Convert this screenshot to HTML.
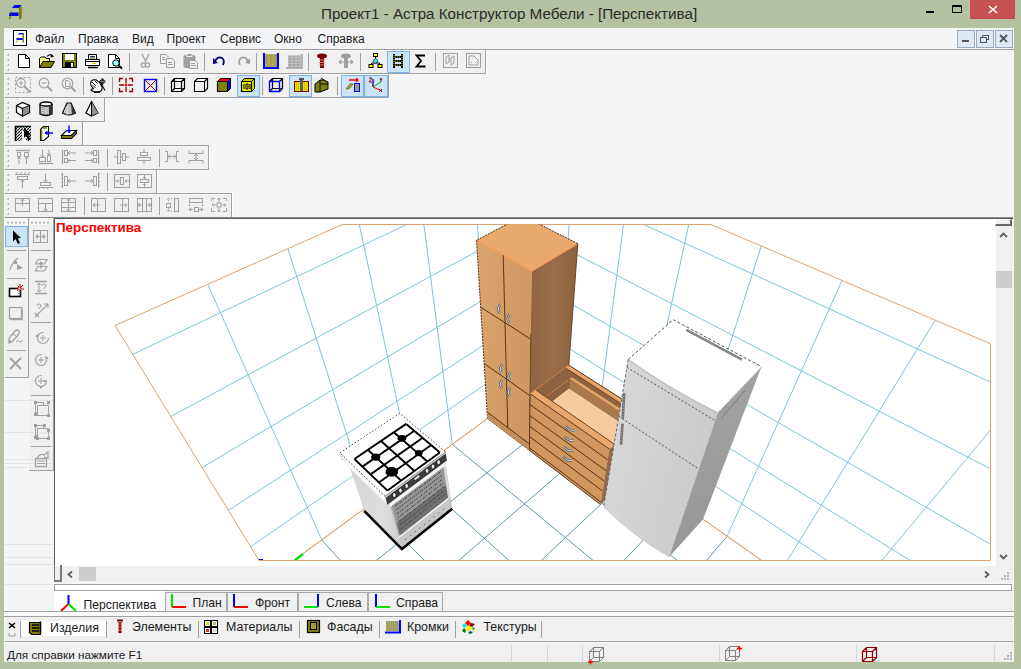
<!DOCTYPE html><html><head><meta charset="utf-8"><style>
html,body{margin:0;padding:0;width:1021px;height:669px;overflow:hidden;font-family:"Liberation Sans",sans-serif;}
svg{overflow:visible}
</style></head><body><div style="position:absolute;left:0px;top:0px;width:1021px;height:669px;background:#b4c2a1"></div>
<div style="position:absolute;left:321px;top:6px;font-size:15.2px;line-height:1;color:#2b2b2b;white-space:nowrap;">Проект1 - Астра Конструктор Мебели - [Перспектива]</div>
<svg style="position:absolute;left:0px;top:0px;" width="30" height="24" viewBox="0 0 30 24"><path d="M12 8 L14.5 5 H21.7 L19 8 Z" fill="#0000ff"/><path d="M19 8 L21.8 5.5 V18 L19 20 Z" fill="#808000"/><path d="M9 13 L10 12.6 H18.5 V16 H9 Z" fill="#0000ff"/><path d="M9 13.5 L11.8 10.5 V12.3 L9 15 Z" fill="#808000"/><path d="M9 16.5 H11.8 L9 20 Z" fill="#808000"/></svg>
<div style="position:absolute;left:926px;top:11px;width:8px;height:2px;background:#000"></div>
<div style="position:absolute;left:952px;top:5px;width:10px;height:8px;border:1px solid #000;border-top-width:2px;box-sizing:border-box"></div>
<div style="position:absolute;left:970px;top:0px;width:45px;height:19px;background:#c75050"></div>
<svg style="position:absolute;left:988px;top:5px;" width="10" height="9" viewBox="0 0 10 9"><path d="M1 1 L9 8 M9 1 L1 8" stroke="#fff" stroke-width="1.6"/></svg>
<div style="position:absolute;left:4px;top:28px;width:1010px;height:634px;background:#f4f5f7"></div>
<div style="position:absolute;left:5px;top:29px;width:1008px;height:20px;background:#f4f5f7"></div>
<div style="position:absolute;left:4px;top:49px;width:1010px;height:1px;background:#a9a9a9"></div>
<svg style="position:absolute;left:13px;top:30px;" width="14" height="16" viewBox="0 0 14 16"><rect x="0.5" y="0.5" width="13" height="15" fill="#fff" stroke="#000"/><path d="M5 4.5 L6.3 3 H11 L9.8 4.5 Z" fill="#0000ff"/><path d="M9.5 4.5 L11 3.2 V12 L9.5 13 Z" fill="#808000"/><path d="M3.5 8 H9.5 V10 H3.5 Z" fill="#0000ff"/><path d="M3.5 8.5 L5 7 V8 L3.5 9.5 Z M3.5 10.5 H5 L3.5 13 Z" fill="#808000"/></svg>
<div style="position:absolute;left:35px;top:33px;font-size:12px;line-height:1;color:#1a1a1a;white-space:nowrap;">Файл</div>
<div style="position:absolute;left:78px;top:33px;font-size:12px;line-height:1;color:#1a1a1a;white-space:nowrap;">Правка</div>
<div style="position:absolute;left:132px;top:33px;font-size:12px;line-height:1;color:#1a1a1a;white-space:nowrap;">Вид</div>
<div style="position:absolute;left:166.5px;top:33px;font-size:12px;line-height:1;color:#1a1a1a;white-space:nowrap;">Проект</div>
<div style="position:absolute;left:220px;top:33px;font-size:12px;line-height:1;color:#1a1a1a;white-space:nowrap;">Сервис</div>
<div style="position:absolute;left:274px;top:33px;font-size:12px;line-height:1;color:#1a1a1a;white-space:nowrap;">Окно</div>
<div style="position:absolute;left:317.5px;top:33px;font-size:12px;line-height:1;color:#1a1a1a;white-space:nowrap;">Справка</div>
<div style="position:absolute;left:957px;top:30px;width:18px;height:18px;background:#dfe9f5;border:1px solid #9aaabb;box-sizing:border-box"></div>
<div style="position:absolute;left:976px;top:30px;width:18px;height:18px;background:#dfe9f5;border:1px solid #9aaabb;box-sizing:border-box"></div>
<div style="position:absolute;left:995px;top:30px;width:18px;height:18px;background:#dfe9f5;border:1px solid #9aaabb;box-sizing:border-box"></div>
<svg style="position:absolute;left:957px;top:30px;" width="56" height="18" viewBox="0 0 56 18"><rect x="5" y="10" width="7" height="2" fill="#555"/><rect x="25.5" y="5.5" width="6" height="4" fill="none" stroke="#555"/><rect x="23.5" y="7.5" width="6" height="5" fill="#dfe9f5" stroke="#555"/><path d="M43 5 L50 12 M50 5 L43 12" stroke="#555" stroke-width="1.8"/></svg>
<div style="position:absolute;left:5px;top:50px;width:480px;height:23px;background:#f0f0f0"></div>
<div style="position:absolute;left:485px;top:50px;width:1px;height:23px;background:#a0a0a0"></div>
<div style="position:absolute;left:486px;top:50px;width:1px;height:24px;background:#ffffff"></div>
<div style="position:absolute;left:5px;top:50px;width:480px;height:1px;background:#fafafa"></div>
<div style="position:absolute;left:5px;top:74px;width:383px;height:23px;background:#f0f0f0"></div>
<div style="position:absolute;left:388px;top:74px;width:1px;height:23px;background:#a0a0a0"></div>
<div style="position:absolute;left:389px;top:74px;width:1px;height:24px;background:#ffffff"></div>
<div style="position:absolute;left:5px;top:74px;width:383px;height:1px;background:#fafafa"></div>
<div style="position:absolute;left:5px;top:98px;width:99px;height:23px;background:#f0f0f0"></div>
<div style="position:absolute;left:104px;top:98px;width:1px;height:23px;background:#a0a0a0"></div>
<div style="position:absolute;left:105px;top:98px;width:1px;height:24px;background:#ffffff"></div>
<div style="position:absolute;left:5px;top:98px;width:99px;height:1px;background:#fafafa"></div>
<div style="position:absolute;left:5px;top:122px;width:77px;height:23px;background:#f0f0f0"></div>
<div style="position:absolute;left:82px;top:122px;width:1px;height:23px;background:#a0a0a0"></div>
<div style="position:absolute;left:83px;top:122px;width:1px;height:24px;background:#ffffff"></div>
<div style="position:absolute;left:5px;top:122px;width:77px;height:1px;background:#fafafa"></div>
<div style="position:absolute;left:5px;top:146px;width:203px;height:23px;background:#f0f0f0"></div>
<div style="position:absolute;left:208px;top:146px;width:1px;height:23px;background:#a0a0a0"></div>
<div style="position:absolute;left:209px;top:146px;width:1px;height:24px;background:#ffffff"></div>
<div style="position:absolute;left:5px;top:146px;width:203px;height:1px;background:#fafafa"></div>
<div style="position:absolute;left:5px;top:170px;width:151px;height:23px;background:#f0f0f0"></div>
<div style="position:absolute;left:156px;top:170px;width:1px;height:23px;background:#a0a0a0"></div>
<div style="position:absolute;left:157px;top:170px;width:1px;height:24px;background:#ffffff"></div>
<div style="position:absolute;left:5px;top:170px;width:151px;height:1px;background:#fafafa"></div>
<div style="position:absolute;left:5px;top:194px;width:226px;height:23px;background:#f0f0f0"></div>
<div style="position:absolute;left:231px;top:194px;width:1px;height:23px;background:#a0a0a0"></div>
<div style="position:absolute;left:232px;top:194px;width:1px;height:24px;background:#ffffff"></div>
<div style="position:absolute;left:5px;top:194px;width:226px;height:1px;background:#fafafa"></div>
<div style="position:absolute;left:5px;top:49px;width:1009px;height:1px;background:#a0a0a0"></div>
<div style="position:absolute;left:5px;top:73px;width:481px;height:1px;background:#a0a0a0"></div>
<div style="position:absolute;left:5px;top:97px;width:384px;height:1px;background:#a0a0a0"></div>
<div style="position:absolute;left:5px;top:121px;width:100px;height:1px;background:#a0a0a0"></div>
<div style="position:absolute;left:5px;top:145px;width:204px;height:1px;background:#a0a0a0"></div>
<div style="position:absolute;left:5px;top:169px;width:204px;height:1px;background:#a0a0a0"></div>
<div style="position:absolute;left:5px;top:193px;width:227px;height:1px;background:#a0a0a0"></div>
<div style="position:absolute;left:5px;top:217px;width:1008px;height:1px;background:#8a8a8a"></div>
<div style="position:absolute;left:54px;top:218px;width:959px;height:1px;background:#5a5a5a"></div>
<svg style="position:absolute;left:6px;top:53px;" width="4" height="20" viewBox="0 0 4 20"><rect x="2" y="1" width="1" height="1" fill="#a8a8a8"/><rect x="1" y="2" width="2" height="1" fill="#c0c0c0"/><rect x="2" y="6" width="1" height="1" fill="#a8a8a8"/><rect x="1" y="7" width="2" height="1" fill="#c0c0c0"/><rect x="2" y="11" width="1" height="1" fill="#a8a8a8"/><rect x="1" y="12" width="2" height="1" fill="#c0c0c0"/><rect x="2" y="16" width="1" height="1" fill="#a8a8a8"/><rect x="1" y="17" width="2" height="1" fill="#c0c0c0"/></svg>
<svg style="position:absolute;left:6px;top:77px;" width="4" height="20" viewBox="0 0 4 20"><rect x="2" y="1" width="1" height="1" fill="#a8a8a8"/><rect x="1" y="2" width="2" height="1" fill="#c0c0c0"/><rect x="2" y="6" width="1" height="1" fill="#a8a8a8"/><rect x="1" y="7" width="2" height="1" fill="#c0c0c0"/><rect x="2" y="11" width="1" height="1" fill="#a8a8a8"/><rect x="1" y="12" width="2" height="1" fill="#c0c0c0"/><rect x="2" y="16" width="1" height="1" fill="#a8a8a8"/><rect x="1" y="17" width="2" height="1" fill="#c0c0c0"/></svg>
<svg style="position:absolute;left:6px;top:101px;" width="4" height="20" viewBox="0 0 4 20"><rect x="2" y="1" width="1" height="1" fill="#a8a8a8"/><rect x="1" y="2" width="2" height="1" fill="#c0c0c0"/><rect x="2" y="6" width="1" height="1" fill="#a8a8a8"/><rect x="1" y="7" width="2" height="1" fill="#c0c0c0"/><rect x="2" y="11" width="1" height="1" fill="#a8a8a8"/><rect x="1" y="12" width="2" height="1" fill="#c0c0c0"/><rect x="2" y="16" width="1" height="1" fill="#a8a8a8"/><rect x="1" y="17" width="2" height="1" fill="#c0c0c0"/></svg>
<svg style="position:absolute;left:6px;top:125px;" width="4" height="20" viewBox="0 0 4 20"><rect x="2" y="1" width="1" height="1" fill="#a8a8a8"/><rect x="1" y="2" width="2" height="1" fill="#c0c0c0"/><rect x="2" y="6" width="1" height="1" fill="#a8a8a8"/><rect x="1" y="7" width="2" height="1" fill="#c0c0c0"/><rect x="2" y="11" width="1" height="1" fill="#a8a8a8"/><rect x="1" y="12" width="2" height="1" fill="#c0c0c0"/><rect x="2" y="16" width="1" height="1" fill="#a8a8a8"/><rect x="1" y="17" width="2" height="1" fill="#c0c0c0"/></svg>
<svg style="position:absolute;left:6px;top:149px;" width="4" height="20" viewBox="0 0 4 20"><rect x="2" y="1" width="1" height="1" fill="#a8a8a8"/><rect x="1" y="2" width="2" height="1" fill="#c0c0c0"/><rect x="2" y="6" width="1" height="1" fill="#a8a8a8"/><rect x="1" y="7" width="2" height="1" fill="#c0c0c0"/><rect x="2" y="11" width="1" height="1" fill="#a8a8a8"/><rect x="1" y="12" width="2" height="1" fill="#c0c0c0"/><rect x="2" y="16" width="1" height="1" fill="#a8a8a8"/><rect x="1" y="17" width="2" height="1" fill="#c0c0c0"/></svg>
<svg style="position:absolute;left:6px;top:173px;" width="4" height="20" viewBox="0 0 4 20"><rect x="2" y="1" width="1" height="1" fill="#a8a8a8"/><rect x="1" y="2" width="2" height="1" fill="#c0c0c0"/><rect x="2" y="6" width="1" height="1" fill="#a8a8a8"/><rect x="1" y="7" width="2" height="1" fill="#c0c0c0"/><rect x="2" y="11" width="1" height="1" fill="#a8a8a8"/><rect x="1" y="12" width="2" height="1" fill="#c0c0c0"/><rect x="2" y="16" width="1" height="1" fill="#a8a8a8"/><rect x="1" y="17" width="2" height="1" fill="#c0c0c0"/></svg>
<svg style="position:absolute;left:6px;top:197px;" width="4" height="20" viewBox="0 0 4 20"><rect x="2" y="1" width="1" height="1" fill="#a8a8a8"/><rect x="1" y="2" width="2" height="1" fill="#c0c0c0"/><rect x="2" y="6" width="1" height="1" fill="#a8a8a8"/><rect x="1" y="7" width="2" height="1" fill="#c0c0c0"/><rect x="2" y="11" width="1" height="1" fill="#a8a8a8"/><rect x="1" y="12" width="2" height="1" fill="#c0c0c0"/><rect x="2" y="16" width="1" height="1" fill="#a8a8a8"/><rect x="1" y="17" width="2" height="1" fill="#c0c0c0"/></svg>
<div style="position:absolute;left:5px;top:218px;width:23px;height:159px;background:#f0f0f0;border-right:1px solid #a0a0a0;border-bottom:1px solid #a0a0a0"></div>
<div style="position:absolute;left:5px;top:218px;width:23px;height:7px;background:#f8f8f8"></div>
<div style="position:absolute;left:29px;top:218px;width:24px;height:252px;background:#f0f0f0;border-right:1px solid #a0a0a0;border-bottom:1px solid #a0a0a0"></div>
<div style="position:absolute;left:29px;top:218px;width:24px;height:7px;background:#f8f8f8"></div>
<div style="position:absolute;left:5px;top:226px;width:23px;height:21px;background:#cce4f7;border:1px solid #7eb4ea;box-sizing:border-box"></div>
<svg style="position:absolute;left:6px;top:221px;" width="22" height="3" viewBox="0 0 22 3"><rect x="1" y="0.5" width="2" height="2" fill="#b4b4b4"/><rect x="5" y="0.5" width="2" height="2" fill="#b4b4b4"/><rect x="9" y="0.5" width="2" height="2" fill="#b4b4b4"/><rect x="13" y="0.5" width="2" height="2" fill="#b4b4b4"/><rect x="17" y="0.5" width="2" height="2" fill="#b4b4b4"/></svg>
<svg style="position:absolute;left:30px;top:221px;" width="22" height="3" viewBox="0 0 22 3"><rect x="1" y="0.5" width="2" height="2" fill="#b4b4b4"/><rect x="5" y="0.5" width="2" height="2" fill="#b4b4b4"/><rect x="9" y="0.5" width="2" height="2" fill="#b4b4b4"/><rect x="13" y="0.5" width="2" height="2" fill="#b4b4b4"/><rect x="17" y="0.5" width="2" height="2" fill="#b4b4b4"/></svg>
<div style="position:absolute;left:7px;top:250px;width:19px;height:1px;background:#a0a0a0"></div>
<div style="position:absolute;left:7px;top:278px;width:19px;height:1px;background:#a0a0a0"></div>
<div style="position:absolute;left:7px;top:350px;width:19px;height:1px;background:#a0a0a0"></div>
<div style="position:absolute;left:31px;top:250px;width:20px;height:1px;background:#a0a0a0"></div>
<div style="position:absolute;left:31px;top:322px;width:20px;height:1px;background:#a0a0a0"></div>
<div style="position:absolute;left:31px;top:395px;width:20px;height:1px;background:#a0a0a0"></div>
<div style="position:absolute;left:31px;top:446px;width:20px;height:1px;background:#a0a0a0"></div>
<div style="position:absolute;left:5px;top:400px;width:48px;height:1px;background:#e2e3e5"></div>
<div style="position:absolute;left:5px;top:432px;width:48px;height:1px;background:#e2e3e5"></div>
<div style="position:absolute;left:5px;top:459px;width:48px;height:1px;background:#e2e3e5"></div>
<div style="position:absolute;left:5px;top:463px;width:48px;height:1px;background:#e2e3e5"></div>
<div style="position:absolute;left:5px;top:467px;width:48px;height:1px;background:#e2e3e5"></div>
<div style="position:absolute;left:5px;top:544px;width:48px;height:1px;background:#e2e3e5"></div>
<div style="position:absolute;left:5px;top:557px;width:48px;height:1px;background:#e2e3e5"></div>
<div style="position:absolute;left:5px;top:564px;width:48px;height:1px;background:#e2e3e5"></div>
<div style="position:absolute;left:5px;top:584px;width:48px;height:1px;background:#e2e3e5"></div>
<div style="position:absolute;left:54px;top:218px;width:1px;height:348px;background:#5a5a5a"></div>
<div style="position:absolute;left:55px;top:219px;width:941px;height:347px;background:#fff"></div>
<svg style="position:absolute;left:0;top:0" width="1021" height="669" viewBox="0 0 1021 669"><path d="M488.94 417.52 L477.52 224.50 M452.27 444.36 L423.86 224.50 M412.48 473.47 L359.33 224.50 M369.14 505.18 L287.91 248.68 M321.77 539.84 L207.76 284.28 M522.84 358.35 L250.65 546.69 M522.84 319.79 L228.39 510.39 M522.84 276.23 L202.17 467.63 M522.84 226.61 L170.82 416.51 M406.86 224.50 L132.68 354.31 M557.42 417.00 L569.02 224.50 M594.76 443.23 L623.49 224.50 M635.20 471.64 L688.71 224.50 M679.16 502.51 L761.31 246.01 M727.10 536.19 L842.07 280.45 M787.34 560.50 L935.17 320.15 M881.70 560.50 L990.50 430.11 M522.84 358.35 L827.18 560.50 M522.84 319.79 L910.21 560.50 M522.84 276.23 L990.50 544.19 M522.84 226.61 L990.50 468.79 M643.66 224.50 L990.50 382.14" stroke="#7cc4dc" stroke-width="1" fill="none"/>
<path d="M488.94 417.52 L677.43 560.50 M452.27 444.36 L593.15 560.50 M412.48 473.47 L508.86 560.50 M369.14 505.18 L424.58 560.50 M321.77 539.84 L340.30 560.50 M557.42 417.00 L376.12 560.50 M594.76 443.23 L458.69 560.50 M635.20 471.64 L541.27 560.50 M679.16 502.51 L623.85 560.50 M727.10 536.19 L706.43 560.50" stroke="#5e9aae" stroke-width="1" fill="none"/>
<path d="M522.84 224.50 L522.84 392.72 L293.54 560.50 L259.12 560.50 L115.00 325.48 L342.34 224.50 Z M522.84 224.50 L522.84 392.72 L761.71 560.50 L990.50 560.50 L990.50 343.74 L710.87 224.50 Z M761.71 560.50 L522.84 392.72 L293.54 560.50 Z" stroke="#dca370" stroke-width="1" fill="none"/>
<path d="M295 560 L303 554" stroke="#00e000" stroke-width="2.2"/><path d="M259 559.5 H263" stroke="#0000ff" stroke-width="1"/><defs><clipPath id="rc"><rect x="59.5" y="224.5" width="931" height="336"/></clipPath></defs><g clip-path="url(#rc)"><defs><linearGradient id="tcf" x1="0" y1="0" x2="1" y2="0.3"><stop offset="0" stop-color="#d9a56e"/><stop offset="1" stop-color="#cf9860"/></linearGradient><linearGradient id="tcs" x1="0" y1="0" x2="1" y2="0"><stop offset="0" stop-color="#8f6443"/><stop offset="0.5" stop-color="#9a6d48"/><stop offset="1" stop-color="#8a613f"/></linearGradient></defs><polygon points="487.53,418.56 529.42,450.44 531.60,271.21 476.52,240.26" fill="url(#tcf)" stroke="none" stroke-width="1" /><polygon points="529.42,450.44 564.65,422.09 577.78,243.64 531.60,271.21" fill="url(#tcs)" stroke="none" stroke-width="1" /><polygon points="476.52,240.26 531.60,271.21 577.78,243.64 522.84,215.85" fill="#eaa96c" stroke="none" stroke-width="1" /><polyline points="476.52,240.26 531.60,271.21 577.78,243.64" fill="none" stroke="#f5984f" stroke-width="1.2" /><polyline points="577.78,243.64 522.84,215.85 476.52,240.26 487.53,418.56 529.42,450.44" fill="none" stroke="#4e2e16" stroke-width="1" stroke-dasharray="2 1"/><polyline points="577.78,243.64 564.65,422.09" fill="none" stroke="#6b4526" stroke-width="1" /><polyline points="530.85,333.51 529.42,450.44" fill="none" stroke="#6b4526" stroke-width="1" /><polygon points="487.53,418.56 529.42,450.44 529.50,443.95 487.13,412.01" fill="#c48f5a" stroke="none" stroke-width="1" /><polyline points="480.66,307.20 530.78,339.15" fill="none" stroke="#5a3518" stroke-width="1" /><polyline points="484.14,363.57 530.09,395.74" fill="none" stroke="#5a3518" stroke-width="1" /><polyline points="487.13,412.01 529.50,443.95" fill="none" stroke="#5a3518" stroke-width="1" /><polyline points="507.81,427.60 503.20,255.25" fill="none" stroke="#5a3518" stroke-width="1" /><path d="M500.3 304.7 Q496.6 309.2 500.0 313.2" fill="none" stroke="#44546a" stroke-width="2.3"/><path d="M500.3 304.7 Q496.6 309.2 500.0 313.2" fill="none" stroke="#eef2f8" stroke-width="0.9"/><path d="M509.7 314.3 Q506.0 318.8 509.4 322.8" fill="none" stroke="#44546a" stroke-width="2.3"/><path d="M509.7 314.3 Q506.0 318.8 509.4 322.8" fill="none" stroke="#eef2f8" stroke-width="0.9"/><path d="M502.1 364.6 Q498.4 369.1 501.8 373.1" fill="none" stroke="#44546a" stroke-width="2.3"/><path d="M502.1 364.6 Q498.4 369.1 501.8 373.1" fill="none" stroke="#eef2f8" stroke-width="0.9"/><path d="M510.6 372.0 Q506.9 376.5 510.3 380.5" fill="none" stroke="#44546a" stroke-width="2.3"/><path d="M510.6 372.0 Q506.9 376.5 510.3 380.5" fill="none" stroke="#eef2f8" stroke-width="0.9"/><path d="M502.3 379.8 Q498.6 384.3 502.0 388.3" fill="none" stroke="#44546a" stroke-width="2.3"/><path d="M502.3 379.8 Q498.6 384.3 502.0 388.3" fill="none" stroke="#eef2f8" stroke-width="0.9"/><path d="M510.2 387.7 Q506.5 392.2 509.9 396.2" fill="none" stroke="#44546a" stroke-width="2.3"/><path d="M510.2 387.7 Q506.5 392.2 509.9 396.2" fill="none" stroke="#eef2f8" stroke-width="0.9"/><polygon points="529.42,450.44 600.47,504.50 609.32,449.08 530.11,393.79" fill="#cf975d" stroke="none" stroke-width="1" /><polygon points="600.47,504.50 635.20,471.64 647.38,415.37 609.32,449.08" fill="#96694a" stroke="none" stroke-width="1" /><polygon points="530.11,393.79 609.32,449.08 647.38,415.37 568.84,365.17" fill="#8c6240" stroke="none" stroke-width="1" /><clipPath id="duc"><polygon points="530.11,393.79 609.32,449.08 647.38,415.37 568.84,365.17"/></clipPath><g clip-path="url(#duc)"><polygon points="542.21,408.94 610.89,457.37 637.29,433.66 569.02,388.36" fill="#f5cc9c" stroke="none" stroke-width="1" /><polygon points="569.02,388.36 637.29,433.66 639.25,424.16 569.75,378.79" fill="#a9794b" stroke="none" stroke-width="1" /><polygon points="569.75,378.79 639.25,424.16 641.37,422.28 571.91,377.15" fill="#e3a46a" stroke="none" stroke-width="1" /><polygon points="542.21,408.94 569.02,388.36 569.75,378.79 542.53,399.38" fill="#8a6040" stroke="none" stroke-width="1" /><polyline points="542.53,399.38 569.75,378.79" fill="none" stroke="#f0924c" stroke-width="1" stroke-dasharray="2 1"/><polygon points="565.27,367.81 643.89,418.46 647.38,415.37 568.84,365.17" fill="#e8a66a" stroke="none" stroke-width="1" /><polyline points="565.27,367.81 643.89,418.46" fill="none" stroke="#6a4424" stroke-width="1" /></g><polygon points="530.11,393.79 609.32,449.08 614.67,444.34 535.54,389.78" fill="#e9a86b" stroke="none" stroke-width="1" /><polyline points="535.54,389.78 614.67,444.34" fill="none" stroke="#6a4424" stroke-width="1" /><polyline points="530.11,393.79 609.32,449.08" fill="none" stroke="#5e3a1e" stroke-width="1" /><polyline points="530.11,393.79 568.84,365.17" fill="none" stroke="#f0924c" stroke-width="1" stroke-dasharray="2 1"/><polyline points="568.84,365.17 647.38,415.37" fill="none" stroke="#5e3a1e" stroke-width="1" /><polyline points="529.98,404.55 607.62,459.67" fill="none" stroke="#5a3518" stroke-width="1" /><polyline points="529.85,415.65 605.88,470.57" fill="none" stroke="#5a3518" stroke-width="1" /><polyline points="529.72,426.34 604.21,481.03" fill="none" stroke="#5a3518" stroke-width="1" /><polyline points="529.59,436.63 602.61,491.08" fill="none" stroke="#5a3518" stroke-width="1" /><polyline points="529.45,447.86 600.87,502.00" fill="none" stroke="#5a3518" stroke-width="1" /><polyline points="530.11,393.79 529.42,450.44 600.47,504.50" fill="none" stroke="#5e3a1e" stroke-width="1" /><path d="M565.7 426.2 Q568.7 431.2 574.7 430.2" fill="none" stroke="#44546a" stroke-width="2.3"/><path d="M565.7 426.2 Q568.7 431.2 574.7 430.2" fill="none" stroke="#eef2f8" stroke-width="0.9"/><path d="M564.8 436.3 Q567.8 441.3 573.8 440.3" fill="none" stroke="#44546a" stroke-width="2.3"/><path d="M564.8 436.3 Q567.8 441.3 573.8 440.3" fill="none" stroke="#eef2f8" stroke-width="0.9"/><path d="M564.0 446.7 Q567.0 451.7 573.0 450.7" fill="none" stroke="#44546a" stroke-width="2.3"/><path d="M564.0 446.7 Q567.0 451.7 573.0 450.7" fill="none" stroke="#eef2f8" stroke-width="0.9"/><path d="M563.2 456.4 Q566.2 461.4 572.2 460.4" fill="none" stroke="#44546a" stroke-width="2.3"/><path d="M563.2 456.4 Q566.2 461.4 572.2 460.4" fill="none" stroke="#eef2f8" stroke-width="0.9"/><defs><linearGradient id="frf" x1="0" y1="0" x2="1" y2="0.4"><stop offset="0" stop-color="#d9d9d9"/><stop offset="0.45" stop-color="#d3d3d3"/><stop offset="1" stop-color="#cbcbcb"/></linearGradient><linearGradient id="frs" x1="0" y1="0" x2="0" y2="1"><stop offset="0" stop-color="#a2a2a2"/><stop offset="1" stop-color="#979797"/></linearGradient></defs><path d="M603.5 507.4 Q633.1 536.7 668.9 557.2 L717.6 412.8 Q667.5 388.0 628.2 359.5 Z" fill="url(#frf)"/><polygon points="668.92,557.23 703.08,519.32 761.46,366.68 717.61,412.76" fill="url(#frs)" stroke="none" stroke-width="1" /><path d="M628.2 359.5 Q667.5 388.0 717.6 412.8 L761.5 366.7 L673.2 319.7 Z" fill="#ffffff"/><path d="M628.2 359.5 Q667.5 388.0 717.6 412.8" fill="none" stroke="#bdbdbd" stroke-width="1.5"/><polyline points="628.24,359.51 673.16,319.67 761.46,366.68" fill="none" stroke="#555" stroke-width="1" stroke-dasharray="3 2"/><polyline points="628.24,359.51 603.53,507.43" fill="none" stroke="#666" stroke-width="1" stroke-dasharray="3 2"/><polyline points="761.46,366.68 717.61,412.76 668.92,557.23" fill="none" stroke="#c8c8c8" stroke-width="1" stroke-dasharray="2 2"/><polyline points="626.93,367.35 714.98,420.57" fill="none" stroke="#555" stroke-width="1" stroke-dasharray="2 2"/><polyline points="618.75,416.35 698.66,468.97" fill="none" stroke="#555" stroke-width="1" stroke-dasharray="2 2"/><polyline points="686.41,329.90 742.03,359.68" fill="none" stroke="#808080" stroke-width="2.6" /><polyline points="686.41,329.90 742.03,359.68" fill="none" stroke="#a8a8a8" stroke-width="0.8" stroke-dasharray="1 1"/><polyline points="624.22,392.87 622.70,418.98" fill="none" stroke="#707070" stroke-width="2.6" /><polyline points="622.46,423.71 621.00,444.79" fill="none" stroke="#707070" stroke-width="2.6" /><polyline points="624.22,392.87 621.00,444.79" fill="none" stroke="#c0c0c0" stroke-width="0.8" stroke-dasharray="1 2"/><polyline points="721.17,418.51 745.49,389.94" fill="none" stroke="#7a7a7a" stroke-width="1" /><defs><linearGradient id="stl" x1="0" y1="0" x2="1" y2="0"><stop offset="0" stop-color="#d4d4d4"/><stop offset="0.6" stop-color="#dedede"/><stop offset="1" stop-color="#cfcfcf"/></linearGradient></defs><polygon points="364.39,511.49 402.06,549.64 388.57,500.42 347.65,460.87" fill="url(#stl)" stroke="none" stroke-width="1" /><polygon points="402.06,549.64 452.27,509.40 444.84,458.72 388.57,500.42" fill="#b4b4b4" stroke="none" stroke-width="1" /><polygon points="388.57,500.42 444.84,458.72 445.82,465.45 390.37,506.98" fill="#f4f4f4" stroke="none" stroke-width="1" /><polygon points="391.92,505.83 443.52,467.17 448.15,497.72 399.95,535.58" fill="#959595" stroke="none" stroke-width="1" /><polygon points="396.61,523.19 446.22,484.98 448.15,497.72 399.95,535.58" fill="#707070" stroke="none" stroke-width="1" /><polygon points="398.51,536.71 450.31,496.03 450.60,497.99 399.03,538.60" fill="#f2f2f2" stroke="none" stroke-width="1" /><polygon points="399.03,538.60 450.60,497.99 452.09,508.16 401.73,548.44" fill="#c6c6c6" stroke="none" stroke-width="1" /><polyline points="405.09,539.85 447.09,506.51" fill="none" stroke="#777" stroke-width="1" stroke-dasharray="2 4"/><polygon points="443.52,467.17 445.82,465.45 450.60,497.99 448.45,499.68" fill="#d8d8d8" stroke="none" stroke-width="1" /><polyline points="395.04,506.07 441.55,471.11" fill="none" stroke="#3a3a3a" stroke-width="1" stroke-dasharray="3 1 1 1"/><polyline points="396.07,509.97 442.18,475.09" fill="none" stroke="#3a3a3a" stroke-width="1" stroke-dasharray="1 1 2 1"/><polyline points="397.09,513.80 442.79,479.02" fill="none" stroke="#3a3a3a" stroke-width="1" stroke-dasharray="2 2 1 1"/><polyline points="398.08,517.58 443.40,482.89" fill="none" stroke="#3a3a3a" stroke-width="1" stroke-dasharray="1 2 3 1"/><polyline points="399.06,521.30 443.99,486.70" fill="none" stroke="#3a3a3a" stroke-width="1" stroke-dasharray="3 1 1 1"/><polyline points="400.03,524.96 444.58,490.45" fill="none" stroke="#3a3a3a" stroke-width="1" stroke-dasharray="1 1 2 1"/><polyline points="400.98,528.56 445.16,494.15" fill="none" stroke="#3a3a3a" stroke-width="1" stroke-dasharray="2 2 1 1"/><polyline points="364.19,510.87 401.89,549.04 452.18,508.78" fill="none" stroke="#000" stroke-width="2.6" /><polygon points="342.79,461.26 387.40,504.67 385.10,496.42 339.92,452.81" fill="#f8f8f8" stroke="none" stroke-width="1" /><polygon points="387.40,504.67 446.83,460.42 445.62,451.96 385.10,496.42" fill="#d0d0d0" stroke="none" stroke-width="1" /><polygon points="385.52,497.94 445.84,453.52 446.83,460.42 387.40,504.67" fill="#3c3c3c" stroke="none" stroke-width="1" /><polyline points="339.92,452.81 342.79,461.26" fill="none" stroke="#999" stroke-width="1" stroke-dasharray="1.5 1.5"/><ellipse cx="394.3" cy="495.1" rx="1.9" ry="2.5" fill="#e8e8e8" stroke="#000" stroke-width="0.7"/><ellipse cx="400.5" cy="490.5" rx="1.9" ry="2.5" fill="#e8e8e8" stroke="#000" stroke-width="0.7"/><ellipse cx="406.7" cy="485.9" rx="1.9" ry="2.5" fill="#e8e8e8" stroke="#000" stroke-width="0.7"/><ellipse cx="427.1" cy="470.8" rx="1.9" ry="2.5" fill="#e8e8e8" stroke="#000" stroke-width="0.7"/><ellipse cx="433.0" cy="466.5" rx="1.9" ry="2.5" fill="#e8e8e8" stroke="#000" stroke-width="0.7"/><ellipse cx="438.7" cy="462.2" rx="1.9" ry="2.5" fill="#e8e8e8" stroke="#000" stroke-width="0.7"/><rect x="414.2" y="476.6" width="6" height="2" fill="#ddd" transform="rotate(-38 417.2 478.1)"/><polygon points="339.92,452.81 385.10,496.42 445.62,451.96 399.64,413.32" fill="#ffffff" stroke="none" stroke-width="1" /><polyline points="385.10,496.42 339.92,452.81 399.64,413.32 445.62,451.96" fill="none" stroke="#444" stroke-width="1" stroke-dasharray="1.5 2"/><polyline points="385.10,496.42 445.62,451.96" fill="none" stroke="#888" stroke-width="1" /><path d="M406.2 423.9 L439.9 452.4 M393.8 432.3 L427.3 461.5 M381.0 441.0 L414.4 471.0 M367.8 449.8 L401.1 480.6 M354.4 459.0 L387.5 490.6 M406.2 423.9 L354.4 459.0 M414.4 430.8 L362.4 466.6 M422.7 437.8 L370.6 474.4 M431.2 445.0 L378.9 482.4 M439.9 452.4 L387.5 490.6" stroke="#000" stroke-width="1.9" fill="none"/><ellipse cx="375.7" cy="457.1" rx="4.6" ry="3.6" fill="#000"/><ellipse cx="401.9" cy="438.3" rx="4.4" ry="3.4" fill="#000"/><ellipse cx="418.8" cy="453.1" rx="3.9" ry="3.1" fill="#000"/><ellipse cx="391.8" cy="471.9" rx="6.3" ry="4.9" fill="#000"/></g></svg>
<div style="position:absolute;left:56px;top:221px;font-size:13.4px;line-height:1;color:#ff0000;white-space:nowrap;font-weight:bold">Перспектива</div>
<div style="position:absolute;left:996px;top:219px;width:17px;height:347px;background:#f0f0f0"></div>
<div style="position:absolute;left:995px;top:219px;width:17px;height:7px;background:#f0f0f0;border-right:2px solid #666;border-bottom:2px solid #666;border-top:1px solid #fff;border-left:1px solid #fff;box-sizing:border-box"></div>
<svg style="position:absolute;left:999px;top:232px;" width="9" height="6" viewBox="0 0 9 6"><path d="M1 5 L4.5 1.5 L8 5" fill="none" stroke="#606060" stroke-width="1.8"/></svg>
<div style="position:absolute;left:996px;top:271px;width:16px;height:17px;background:#cdcdcd"></div>
<svg style="position:absolute;left:999px;top:554px;" width="9" height="6" viewBox="0 0 9 6"><path d="M1 1 L4.5 4.5 L8 1" fill="none" stroke="#606060" stroke-width="1.8"/></svg>
<div style="position:absolute;left:54px;top:566px;width:959px;height:16px;background:#f0f0f0"></div>
<div style="position:absolute;left:54px;top:565px;width:8px;height:17px;border-left:1px solid #777;border-right:2px solid #777;border-bottom:2px solid #777;box-sizing:border-box"></div>
<svg style="position:absolute;left:67px;top:570.5px;" width="6" height="7" viewBox="0 0 6 7"><path d="M5 0.5 L1.5 3.5 L5 6.5" fill="none" stroke="#606060" stroke-width="1.8"/></svg>
<div style="position:absolute;left:79px;top:567px;width:17px;height:14px;background:#cdcdcd"></div>
<svg style="position:absolute;left:984px;top:570.5px;" width="6" height="7" viewBox="0 0 6 7"><path d="M1 0.5 L4.5 3.5 L1 6.5" fill="none" stroke="#606060" stroke-width="1.8"/></svg>
<svg style="position:absolute;left:1001px;top:572px;" width="9" height="9" viewBox="0 0 9 9"><rect x="6" y="0" width="2" height="2" fill="#b4b4b4"/><rect x="6" y="3" width="2" height="2" fill="#b4b4b4"/><rect x="3" y="3" width="2" height="2" fill="#b4b4b4"/><rect x="6" y="6" width="2" height="2" fill="#b4b4b4"/><rect x="3" y="6" width="2" height="2" fill="#b4b4b4"/><rect x="0" y="6" width="2" height="2" fill="#b4b4b4"/></svg>
<div style="position:absolute;left:54px;top:584px;width:958px;height:7px;background:#fff;border:1px solid #a0a0a0;box-sizing:border-box"></div>
<div style="position:absolute;left:54px;top:591px;width:959px;height:21px;background:#f0f0f0"></div>
<div style="position:absolute;left:54px;top:591px;width:111px;height:21px;background:#fff"></div>
<div style="position:absolute;left:165px;top:592px;width:62px;height:20px;background:#f0f0f0;border:1px solid #a9a9a9;border-bottom:none;box-sizing:border-box"></div>
<div style="position:absolute;left:227px;top:592px;width:71px;height:20px;background:#f0f0f0;border:1px solid #a9a9a9;border-bottom:none;box-sizing:border-box"></div>
<div style="position:absolute;left:298px;top:592px;width:70px;height:20px;background:#f0f0f0;border:1px solid #a9a9a9;border-bottom:none;box-sizing:border-box"></div>
<div style="position:absolute;left:368px;top:592px;width:75px;height:20px;background:#f0f0f0;border:1px solid #a9a9a9;border-bottom:none;box-sizing:border-box"></div>
<div style="position:absolute;left:83.5px;top:599px;font-size:12.2px;line-height:1;color:#1a1a1a;white-space:nowrap;">Перспектива</div>
<div style="position:absolute;left:192.5px;top:597px;font-size:12.1px;line-height:1;color:#1a1a1a;white-space:nowrap;">План</div>
<div style="position:absolute;left:255px;top:597px;font-size:12.2px;line-height:1;color:#1a1a1a;white-space:nowrap;">Фронт</div>
<div style="position:absolute;left:326px;top:597px;font-size:12.1px;line-height:1;color:#1a1a1a;white-space:nowrap;">Слева</div>
<div style="position:absolute;left:396px;top:597px;font-size:12.2px;line-height:1;color:#1a1a1a;white-space:nowrap;">Справа</div>
<svg style="position:absolute;left:60px;top:595px;" width="18" height="17" viewBox="0 0 18 17"><path d="M8.5 0 V9" stroke="#0000ff" stroke-width="2"/><path d="M8.5 9 L1 16" stroke="#ff0000" stroke-width="2"/><path d="M8.5 9 L16 16" stroke="#00e000" stroke-width="2"/></svg>
<svg style="position:absolute;left:171px;top:594px;" width="16" height="15" viewBox="0 0 16 15"><path d="M1 0 V13" stroke="#00e000" stroke-width="2"/><path d="M1 13 H15" stroke="#ff0000" stroke-width="2"/></svg>
<svg style="position:absolute;left:233px;top:594px;" width="16" height="15" viewBox="0 0 16 15"><path d="M1 0 V13" stroke="#0000ff" stroke-width="2"/><path d="M1 13 H15" stroke="#ff0000" stroke-width="2"/></svg>
<svg style="position:absolute;left:303px;top:594px;" width="16" height="15" viewBox="0 0 16 15"><path d="M15 0 V13" stroke="#0000ff" stroke-width="2"/><path d="M1 13 H15" stroke="#00e000" stroke-width="2"/></svg>
<svg style="position:absolute;left:375px;top:594px;" width="16" height="15" viewBox="0 0 16 15"><path d="M1 0 V13" stroke="#0000ff" stroke-width="2"/><path d="M1 13 H15" stroke="#00e000" stroke-width="2"/></svg>
<div style="position:absolute;left:4px;top:611px;width:1010px;height:1px;background:#a0a0a0"></div>
<div style="position:absolute;left:4px;top:612px;width:1010px;height:4px;background:#fafafa"></div>
<div style="position:absolute;left:4px;top:616px;width:1010px;height:1px;background:#a0a0a0"></div>
<div style="position:absolute;left:5px;top:617px;width:1008px;height:24px;background:#f0f0f0"></div>
<div style="position:absolute;left:5px;top:640px;width:1008px;height:1px;background:#f8f8f8"></div>
<div style="position:absolute;left:21px;top:621px;width:85px;height:15px;background:#fff"></div>
<svg style="position:absolute;left:8px;top:622px;" width="8" height="7" viewBox="0 0 8 7"><path d="M1 1 L7 6 M7 1 L1 6" stroke="#000" stroke-width="1.6"/></svg>
<svg style="position:absolute;left:8px;top:633px;" width="8" height="4" viewBox="0 0 8 4"><path d="M1 0 V3 H7 V0" fill="none" stroke="#a0a0a0"/></svg>
<div style="position:absolute;left:20px;top:621px;width:1px;height:17px;background:#a0a0a0"></div>
<div style="position:absolute;left:106px;top:621px;width:1px;height:17px;background:#a0a0a0"></div>
<div style="position:absolute;left:198px;top:621px;width:1px;height:17px;background:#a0a0a0"></div>
<div style="position:absolute;left:299px;top:621px;width:1px;height:17px;background:#a0a0a0"></div>
<div style="position:absolute;left:379px;top:621px;width:1px;height:17px;background:#a0a0a0"></div>
<div style="position:absolute;left:455px;top:621px;width:1px;height:17px;background:#a0a0a0"></div>
<div style="position:absolute;left:541px;top:621px;width:1px;height:17px;background:#a0a0a0"></div>
<div style="position:absolute;left:50px;top:622px;font-size:12.4px;line-height:1;color:#1a1a1a;white-space:nowrap;">Изделия</div>
<div style="position:absolute;left:132px;top:620.5px;font-size:12.4px;line-height:1;color:#1a1a1a;white-space:nowrap;">Элементы</div>
<div style="position:absolute;left:226px;top:620.5px;font-size:12.4px;line-height:1;color:#1a1a1a;white-space:nowrap;">Материалы</div>
<div style="position:absolute;left:327px;top:620.5px;font-size:12.4px;line-height:1;color:#1a1a1a;white-space:nowrap;">Фасады</div>
<div style="position:absolute;left:407px;top:620.5px;font-size:12.4px;line-height:1;color:#1a1a1a;white-space:nowrap;">Кромки</div>
<div style="position:absolute;left:483.5px;top:620.5px;font-size:12.4px;line-height:1;color:#1a1a1a;white-space:nowrap;">Текстуры</div>
<div style="position:absolute;left:5px;top:642px;width:1008px;height:20px;background:#f0f0f0"></div>
<div style="position:absolute;left:5px;top:641px;width:1008px;height:1px;background:#a0a0a0"></div>
<div style="position:absolute;left:5px;top:642px;width:1008px;height:1px;background:#fafafa"></div>
<div style="position:absolute;left:7px;top:648.5px;font-size:11.75px;line-height:1;color:#1a1a1a;white-space:nowrap;">Для справки нажмите F1</div>
<div style="position:absolute;left:511px;top:645px;width:1px;height:17px;background:#d5d5d5"></div>
<div style="position:absolute;left:547px;top:645px;width:1px;height:17px;background:#d5d5d5"></div>
<div style="position:absolute;left:582px;top:645px;width:1px;height:17px;background:#d5d5d5"></div>
<div style="position:absolute;left:719px;top:645px;width:1px;height:17px;background:#d5d5d5"></div>
<div style="position:absolute;left:856px;top:645px;width:1px;height:17px;background:#d5d5d5"></div>
<div style="position:absolute;left:994px;top:645px;width:1px;height:17px;background:#d5d5d5"></div>
<svg style="position:absolute;left:16px;top:53px" width="16" height="16" viewBox="0 0 16 16"><path d="M2.5 1.5 H9.5 L13.5 5.5 V14.5 H2.5 Z" fill="#fff" stroke="#000"/><path d="M9.5 1.5 V5.5 H13.5" fill="none" stroke="#000"/></svg>
<svg style="position:absolute;left:39px;top:53px" width="16" height="16" viewBox="0 0 16 16"><defs><pattern id="yck" width="2" height="2" patternUnits="userSpaceOnUse"><rect width="2" height="2" fill="#ffff00"/><rect width="1" height="1" fill="#fff"/><rect x="1" y="1" width="1" height="1" fill="#fff"/></pattern></defs><path d="M0.5 14.5 V5.5 L2 4 H6 L7 5.5 H10.5 V8.5" fill="url(#yck)" stroke="#000"/><path d="M0.5 14.5 L4 8.5 H15.5 L12 14.5 Z" fill="#808000" stroke="#000"/><path d="M8 3.5 Q10.5 0.5 13.5 2.5" fill="none" stroke="#000" stroke-width="1.1"/><path d="M12 1 L15 3.5 L11.5 4.5 Z" fill="#000"/></svg>
<svg style="position:absolute;left:62px;top:53px" width="16" height="16" viewBox="0 0 16 16" shape-rendering="crispEdges"><rect x="0.5" y="0.5" width="14" height="14" fill="#808000" stroke="#000"/><rect x="3" y="1" width="9" height="6" fill="#fff"/><rect x="3" y="9" width="9" height="6" fill="#000"/><rect x="9" y="10" width="2" height="4" fill="#fff"/></svg>
<svg style="position:absolute;left:84px;top:53px" width="16" height="16" viewBox="0 0 16 16"><path d="M4.5 1.5 H12.5 V6.5 H4.5 Z" fill="#fff" stroke="#000"/><path d="M1.5 6.5 H15.5 V12.5 H1.5 Z" fill="#fff" stroke="#000"/><path d="M2 8.5 H15" stroke="#000"/><path d="M4 14.5 H14" stroke="#000" stroke-width="1.5"/><rect x="8" y="10" width="4" height="1" fill="#e0c000"/><path d="M6 3.5 H11 M6 5 H11" stroke="#000" stroke-width="0.8"/></svg>
<svg style="position:absolute;left:107px;top:53px" width="16" height="16" viewBox="0 0 16 16"><path d="M1.5 1.5 H8.5 L12.5 5.5 V14.5 H1.5 Z" fill="#fff" stroke="#000"/><path d="M8.5 1.5 V5.5 H12.5" fill="none" stroke="#000"/><circle cx="9" cy="10" r="3.2" fill="#9ff" stroke="#000"/><path d="M11 12 L15 15.5" stroke="#000" stroke-width="2"/></svg>
<div style="position:absolute;left:129px;top:53px;width:1px;height:18px;background:#a0a0a0"></div>
<svg style="position:absolute;left:139px;top:53px" width="16" height="16" viewBox="0 0 16 16"><path d="M3 1 L7 9 M10 1 L6 9" stroke="#a0a0a0" stroke-width="1.2"/><circle cx="4.5" cy="12" r="2.2" fill="none" stroke="#a0a0a0" stroke-width="1.2"/><circle cx="8.5" cy="12" r="2.2" fill="none" stroke="#a0a0a0" stroke-width="1.2"/></svg>
<svg style="position:absolute;left:160px;top:53px" width="16" height="16" viewBox="0 0 16 16"><path d="M0.5 1.5 H6 L8 3.5 V10.5 H0.5 Z" fill="#f0f0f0" stroke="#a0a0a0"/><path d="M6.5 5.5 H12 L14.5 8 V14.5 H6.5 Z" fill="#f0f0f0" stroke="#a0a0a0"/><path d="M2 4.5 H5 M2 6.5 H6 M8 9.5 H12 M8 11.5 H13" stroke="#a0a0a0"/></svg>
<svg style="position:absolute;left:183px;top:53px" width="16" height="16" viewBox="0 0 16 16"><rect x="0.5" y="2" width="12" height="13" rx="2" fill="#a0a0a0"/><rect x="4" y="0.5" width="5" height="3" fill="#a0a0a0" stroke="#eee"/><path d="M6.5 7.5 H12 L14.5 10 V15.5 H6.5 Z" fill="#f0f0f0" stroke="#a0a0a0"/><path d="M8 10.5 H12 M8 12.5 H13" stroke="#a0a0a0"/></svg>
<div style="position:absolute;left:204px;top:53px;width:1px;height:18px;background:#a0a0a0"></div>
<svg style="position:absolute;left:212px;top:53px" width="16" height="16" viewBox="0 0 16 16"><path d="M3 8 Q6 3 10 5 Q13 7 11 12" fill="none" stroke="#000080" stroke-width="1.8"/><path d="M1 5 L1 11 L6 10 Z" fill="#000080"/></svg>
<svg style="position:absolute;left:235px;top:53px" width="16" height="16" viewBox="0 0 16 16"><path d="M13 8 Q10 3 6 5 Q3 7 5 12" fill="none" stroke="#a0a0a0" stroke-width="1.8"/><path d="M15 5 L15 11 L10 10 Z" fill="#a0a0a0"/></svg>
<div style="position:absolute;left:256px;top:53px;width:1px;height:18px;background:#a0a0a0"></div>
<svg style="position:absolute;left:263px;top:53px" width="16" height="16" viewBox="0 0 16 16"><rect x="2" y="1" width="12" height="13" fill="#a8a050"/><path d="M2 1 V14 M6 1 V14 M10 1 V14" stroke="#d8d090" stroke-width="0.8" stroke-dasharray="1 1"/><path d="M1 0 V15 H15 V0" fill="none" stroke="#0000ff" stroke-width="2"/></svg>
<svg style="position:absolute;left:286px;top:53px" width="16" height="16" viewBox="0 0 16 16"><rect x="2" y="3" width="13" height="12" fill="#c8c8c8"/><path d="M2 3 H15 M2 6 H15 M2 9 H15 M2 12 H15 M4 3 V15 M8 3 V15 M12 3 V15" stroke="#a0a0a0" stroke-width="1"/><path d="M0 15 H16 V1" fill="none" stroke="#a0a0a0" stroke-width="1.5"/></svg>
<div style="position:absolute;left:308px;top:53px;width:1px;height:18px;background:#a0a0a0"></div>
<svg style="position:absolute;left:316px;top:53px" width="16" height="16" viewBox="0 0 16 16"><ellipse cx="6" cy="3" rx="5" ry="2.5" fill="#800000"/><rect x="4" y="5" width="4" height="10" fill="#800000"/><path d="M3 7 H9 M3 9.5 H9 M3 12 H9" stroke="#ff9090" stroke-width="0.8"/></svg>
<svg style="position:absolute;left:338px;top:53px" width="16" height="16" viewBox="0 0 16 16"><ellipse cx="8" cy="3" rx="5" ry="2.5" fill="#a0a0a0"/><rect x="6" y="5" width="4" height="10" fill="#a0a0a0"/><path d="M1 9 H15 M1 9 L3.5 7 M1 9 L3.5 11 M15 9 L12.5 7 M15 9 L12.5 11" stroke="#a0a0a0" stroke-width="1.2"/></svg>
<div style="position:absolute;left:360px;top:53px;width:1px;height:18px;background:#a0a0a0"></div>
<svg style="position:absolute;left:368px;top:53px" width="16" height="16" viewBox="0 0 16 16"><path d="M7.5 4 V8 M3.5 12 V10 H11.5 V12" fill="none" stroke="#000"/><rect x="5.5" y="0.5" width="4" height="3" fill="#ff0" stroke="#000"/><rect x="1" y="11.5" width="4" height="3" fill="#ff0" stroke="#000"/><rect x="10" y="11.5" width="4" height="3" fill="#ff0" stroke="#000"/><path d="M7.5 5 L10 8 L7.5 11 L5 8 Z" fill="#40e0f0" stroke="#000" stroke-width="0.6"/></svg>
<div style="position:absolute;left:387px;top:51px;width:23px;height:22px;background:#cce4f7;border:1px solid #7eb4ea;box-sizing:border-box"></div>
<svg style="position:absolute;left:392px;top:53px" width="16" height="16" viewBox="0 0 16 16"><path d="M2 1 V15 M10 1 V15" stroke="#000" stroke-width="2"/><path d="M3 4 H9 M3 8 H9 M3 12 H9" stroke="#000" stroke-width="1.8"/><path d="M2 2 V14 M10 2 V14" stroke="#ff0" stroke-width="0.8" stroke-dasharray="1 1"/><path d="M3 4 H9 M3 8 H9 M3 12 H9" stroke="#ff0" stroke-width="0.7" stroke-dasharray="1 1"/></svg>
<svg style="position:absolute;left:414px;top:53px" width="16" height="16" viewBox="0 0 16 16"><path d="M11 2.5 H2.5 L7 8 L2.5 13.5 H11.5" fill="none" stroke="#000" stroke-width="1.8"/></svg>
<div style="position:absolute;left:435px;top:53px;width:1px;height:18px;background:#a0a0a0"></div>
<svg style="position:absolute;left:443px;top:53px" width="16" height="16" viewBox="0 0 16 16"><rect x="0.5" y="0.5" width="14" height="14" fill="none" stroke="#a0a0a0"/><path d="M3 4 L6 2 V9 L3 11 Z M8 5 L11 3 V10 L8 12 Z M6 6 H8" fill="none" stroke="#a0a0a0"/></svg>
<svg style="position:absolute;left:466px;top:53px" width="16" height="16" viewBox="0 0 16 16"><rect x="0.5" y="0.5" width="14" height="14" fill="none" stroke="#a0a0a0"/><path d="M3 3 H8 L12 7 V12 H3 Z" fill="none" stroke="#a0a0a0"/><rect x="5" y="9" width="1" height="1" fill="#a0a0a0"/><rect x="9" y="9" width="1" height="1" fill="#a0a0a0"/></svg>
<svg style="position:absolute;left:15px;top:77px" width="16" height="16" viewBox="0 0 16 16"><rect x="0.5" y="0.5" width="15" height="15" fill="none" stroke="#a0a0a0" stroke-dasharray="2 2"/><circle cx="6" cy="6" r="4.3" fill="#f0f0f0" stroke="#a0a0a0" stroke-width="1.2"/><path d="M4 6 H8 M6 4 V8" stroke="#a0a0a0"/><path d="M9 9 L15 15" stroke="#a0a0a0" stroke-width="2"/></svg>
<svg style="position:absolute;left:38px;top:77px" width="16" height="16" viewBox="0 0 16 16"><circle cx="6" cy="6" r="4.8" fill="none" stroke="#a0a0a0" stroke-width="1.2"/><path d="M3.5 6 H8.5" stroke="#a0a0a0" stroke-width="1.2"/><path d="M9.5 9.5 L14 14" stroke="#a0a0a0" stroke-width="2"/></svg>
<svg style="position:absolute;left:61px;top:77px" width="16" height="16" viewBox="0 0 16 16"><circle cx="6.5" cy="6.5" r="5.3" fill="none" stroke="#a0a0a0" stroke-width="1.2"/><path d="M4.5 3.5 H7 L9 5.5 V9.5 H4.5 Z" fill="none" stroke="#a0a0a0"/><path d="M10 10 L14.5 14.5" stroke="#a0a0a0" stroke-width="2"/></svg>
<div style="position:absolute;left:83px;top:77px;width:1px;height:18px;background:#a0a0a0"></div>
<svg style="position:absolute;left:89px;top:77px" width="18" height="17" viewBox="0 0 18 17"><path d="M2.2 4.2 L4.2 2.8 H7 L10.5 5.5 L13 10 Q13.5 14 10 14.8 H5 L2.5 13.5 Q1.5 12.5 3 12 L4.5 11.8 L2 8.5 Q1 6 2.2 4.2 Z" fill="#fff" stroke="#000" stroke-width="1.1"/><path d="M3 5 L7 9 M3.5 8 L6.5 11 M5.5 3.5 L8.5 6.5" stroke="#000" stroke-width="0.9"/><path d="M5 15.2 H11" stroke="#000" stroke-width="1.3"/><path d="M13.5 1 L17 4.5 L13.5 8 L10 4.5 Z" fill="#000"/><path d="M12.5 3 h1 M14.5 3 h1 M11.5 4.5 h1 M13.5 4.5 h1 M15.5 4.5 h1 M12.5 6 h1 M14.5 6 h1" stroke="#fff" stroke-width="0.9"/><path d="M12 6.5 L16 13.5" stroke="#000" stroke-width="1.1"/></svg>
<div style="position:absolute;left:112px;top:77px;width:1px;height:18px;background:#a0a0a0"></div>
<svg style="position:absolute;left:118px;top:77px" width="16" height="16" viewBox="0 0 16 16"><path d="M1.5 5 V1.5 H5 M11 1.5 H14.5 V5 M1.5 11 V14.5 H5 M11 14.5 H14.5 V11 M8 1 V6 M8 10 V15 M1 8 H6 M10 8 H15" fill="none" stroke="#900000" stroke-width="1.3"/><circle cx="8" cy="8" r="1.4" fill="#ff0000"/></svg>
<svg style="position:absolute;left:143px;top:77px" width="16" height="16" viewBox="0 0 16 16"><rect x="1.5" y="2.5" width="12" height="12" fill="none" stroke="#0000ff" stroke-width="1.4"/><path d="M2 3 L13 14 M13 3 L2 14" stroke="#a00000" stroke-width="1"/></svg>
<div style="position:absolute;left:164px;top:77px;width:1px;height:18px;background:#a0a0a0"></div>
<svg style="position:absolute;left:171px;top:77px" width="16" height="16" viewBox="0 0 16 16"><path d="M0.5 4.5 H10.5 V14.5 H0.5 Z M3.5 1.5 H13.5 V11.5 H3.5 Z M0.5 4.5 L3.5 1.5 M10.5 4.5 L13.5 1.5 M10.5 14.5 L13.5 11.5 M0.5 14.5 L3.5 11.5" fill="none" stroke="#000" stroke-width="1.2"/></svg>
<svg style="position:absolute;left:194px;top:77px" width="16" height="16" viewBox="0 0 16 16"><path d="M0.5 4.5 L3.5 1.5 H13.5 V11.5 L10.5 14.5 H0.5 Z" fill="#fff" stroke="#000" stroke-width="1.2"/><path d="M0.5 4.5 H10.5 V14.5 M10.5 4.5 L13.5 1.5" fill="none" stroke="#000" stroke-width="1.2"/><rect x="1.2" y="5.2" width="8.6" height="8.6" fill="#f0f0f0"/></svg>
<svg style="position:absolute;left:217px;top:77px" width="16" height="16" viewBox="0 0 16 16"><path d="M0.5 4.5 H10.5 V14.5 H0.5 Z" fill="#808000" stroke="#000" stroke-width="1.2"/><path d="M0.5 4.5 L3.5 1.5 H13.5 L10.5 4.5 Z" fill="#ff0000" stroke="#000" stroke-width="1"/><path d="M10.5 4.5 L13.5 1.5 V11.5 L10.5 14.5 Z" fill="#0000ff" stroke="#000" stroke-width="1"/></svg>
<div style="position:absolute;left:237px;top:75px;width:23px;height:22px;background:#cce4f7;border:1px solid #7eb4ea;box-sizing:border-box"></div>
<svg style="position:absolute;left:241px;top:77px" width="16" height="16" viewBox="0 0 16 16"><path d="M0.5 4.5 H10.5 V14.5 H0.5 Z" fill="#f0f000" stroke="#000" stroke-width="1.2"/><path d="M0.5 4.5 L3.5 1.5 H13.5 L10.5 4.5 Z M10.5 4.5 L13.5 1.5 V11.5 L10.5 14.5 Z" fill="#d0d000" stroke="#000" stroke-width="1"/><path d="M3 7 V12 M5 7 V12 H7 V7 Z M9 7 V12" stroke="#000" fill="none"/></svg>
<div style="position:absolute;left:262px;top:77px;width:1px;height:18px;background:#a0a0a0"></div>
<svg style="position:absolute;left:269px;top:77px" width="16" height="16" viewBox="0 0 16 16"><path d="M3.5 1.5 H13.5 V11.5 H3.5 Z M0.5 4.5 L3.5 1.5 M13.5 1.5 L10.5 4.5 M13.5 11.5 L10.5 14.5 M0.5 14.5 L3.5 11.5" fill="none" stroke="#000" stroke-width="1.2"/><path d="M0.5 4.5 H10.5 V14.5 H0.5 Z" fill="none" stroke="#0000ff" stroke-width="1.4"/></svg>
<div style="position:absolute;left:289px;top:75px;width:23px;height:22px;background:#cce4f7;border:1px solid #7eb4ea;box-sizing:border-box"></div>
<svg style="position:absolute;left:294px;top:77px" width="16" height="16" viewBox="0 0 16 16"><rect x="0.5" y="4.5" width="14" height="10" fill="#e8e000" stroke="#800000"/><path d="M2 6 H14 M2 8 H14 M2 10 H14 M2 12 H14" stroke="#a09000" stroke-width="0.6" stroke-dasharray="1 1"/><rect x="5" y="1" width="5" height="2" fill="#555"/><rect x="6" y="3" width="3" height="11" fill="#606060"/></svg>
<svg style="position:absolute;left:314px;top:77px" width="16" height="16" viewBox="0 0 16 16"><path d="M1 7 L6 3 H10 L14 5 V12 L6 15 H1 Z" fill="#808000" stroke="#000"/><path d="M6 3 V15 M6 7 H14" stroke="#000"/><path d="M7 1 L10 3" stroke="#000"/></svg>
<div style="position:absolute;left:337px;top:77px;width:1px;height:18px;background:#a0a0a0"></div>
<div style="position:absolute;left:341px;top:75px;width:23px;height:22px;background:#cce4f7;border:1px solid #7eb4ea;box-sizing:border-box"></div>
<svg style="position:absolute;left:345px;top:77px" width="16" height="16" viewBox="0 0 16 16"><path d="M4 3 H13 M11 1 L13 3 L11 5" fill="none" stroke="#ff0000" stroke-width="1.3"/><path d="M1 12 L5 7 H8 L4 12 Z" fill="#a0a040" stroke="#808000"/><rect x="9.5" y="6.5" width="5" height="8" fill="#a0a080" stroke="#0000ff"/></svg>
<div style="position:absolute;left:364px;top:75px;width:24px;height:22px;background:#cce4f7;border:1px solid #7eb4ea;box-sizing:border-box"></div>
<svg style="position:absolute;left:368px;top:77px" width="16" height="16" viewBox="0 0 16 16"><path d="M5 2 V10 L14 14" fill="none" stroke="#ff0000" stroke-width="1"/><path d="M5 2 V10" stroke="#0000ff"/><path d="M5 10 L13 5" stroke="#00c000"/><path d="M1 1 H4 L1 5 H4" fill="none" stroke="#800000" stroke-width="0.9"/><path d="M12 1 L13 3 L14 1 M13 3 V5" fill="none" stroke="#800000" stroke-width="0.9"/><path d="M11 12 L14 15 M14 12 L11 15" stroke="#800000" stroke-width="0.9"/></svg>
<svg style="position:absolute;left:15px;top:101px" width="16" height="16" viewBox="0 0 16 16"><path d="M1.5 4.5 L7.5 1.5 L14.5 4.5 V11.5 L7.5 15 L1.5 11.5 Z" fill="#fff" stroke="#000" stroke-width="1.3"/><path d="M1.5 4.5 L7.5 7.5 L14.5 4.5 M7.5 7.5 V15" fill="none" stroke="#000" stroke-width="1.2"/><path d="M7.8 8 L14 5 V11.3 L7.8 14.5 Z" fill="#909090"/></svg>
<svg style="position:absolute;left:39px;top:101px" width="16" height="16" viewBox="0 0 16 16"><path d="M1 3 V13 Q7 16 13 13 V3" fill="#c8c8c8" stroke="#000" stroke-width="1.3"/><ellipse cx="7" cy="3" rx="6" ry="2" fill="#fff" stroke="#000" stroke-width="1.3"/><path d="M3 6 V13 M5 6 V14 M9 6 V14 M11 6 V13" stroke="#888" stroke-width="0.8" stroke-dasharray="1 1"/><path d="M10 5 V14 Q12 14 13 13 V4" fill="#333"/></svg>
<svg style="position:absolute;left:62px;top:101px" width="16" height="16" viewBox="0 0 16 16"><path d="M5 2 H9 L13.5 12 Q7 16 0.5 12 Z" fill="#c0c0c0" stroke="#000" stroke-width="1.2"/><path d="M9 2 L13.5 12 Q12 13.5 10 14 Z" fill="#333"/><path d="M4 6 L2 12 M6 5 L5 14" stroke="#fff" stroke-width="0.8" stroke-dasharray="1 1"/></svg>
<svg style="position:absolute;left:85px;top:101px" width="16" height="16" viewBox="0 0 16 16"><path d="M6.5 0.5 L13 12 L6.5 15 L1 12 Z" fill="#fff" stroke="#000" stroke-width="1.2"/><path d="M6.5 1 L13 12 L6.5 14.5 Z" fill="#909090"/><path d="M6.5 0.5 V15" stroke="#000"/></svg>
<svg style="position:absolute;left:14px;top:125px" width="18" height="17" viewBox="0 0 18 17"><defs><pattern id="hp" width="3" height="3" patternUnits="userSpaceOnUse"><rect width="3" height="3" fill="#fff"/><path d="M-0.5 3.5 L3.5 -0.5" stroke="#000" stroke-width="1.1"/></pattern></defs><rect x="1" y="1" width="16" height="15" fill="url(#hp)"/><rect x="8" y="6" width="4" height="10" fill="#fff"/><path d="M1.5 16 V1.5 H17" fill="none" stroke="#000" stroke-width="1.6"/><path d="M10 2.5 L10 13 L12.3 10.8 L14.5 15.5 L16.5 14.5 L14.3 10 L17 9.8 Z" fill="#000"/><path d="M8.5 3 L10.5 2" stroke="#0aa" stroke-width="0.8"/></svg>
<svg style="position:absolute;left:39px;top:125px" width="16" height="16" viewBox="0 0 16 16"><path d="M1.5 4.5 L4.5 1.5 H9.5 V11.5 L5 15.5 H1.5 Z" fill="#fff" stroke="#000" stroke-width="1.1"/><path d="M2.5 5 V15 M4 3 L8 3" stroke="#808000" stroke-width="1.6"/><path d="M14 8 H6" stroke="#0000ff" stroke-width="1.5"/><path d="M8.5 5.5 L5.5 8 L8.5 10.5 Z" fill="#0000ff"/></svg>
<svg style="position:absolute;left:61px;top:125px" width="16" height="16" viewBox="0 0 16 16"><path d="M0.5 10.5 L5.5 5.5 H15.5 L10.5 10.5 Z" fill="#fff" stroke="#000" stroke-width="1.1"/><path d="M0.5 10.5 V13.5 H10.5 L15.5 8.5 V5.5 L10.5 10.5 H0.5" fill="#808000" stroke="#000" stroke-width="1.1"/><path d="M8 0.5 V7" stroke="#0000ff" stroke-width="1.4"/><path d="M5.5 5 L8 8.5 L10.5 5 Z" fill="#0000ff"/></svg>
<svg style="position:absolute;left:15px;top:149px" width="16" height="16" viewBox="0 0 16 16"><path d="M1 1.5 H15" stroke="#a0a0a0" fill="none" stroke-width="1.3"/><rect x="2.5" y="3.5" width="3" height="4" stroke="#a0a0a0" fill="none"/><rect x="9.5" y="3.5" width="4" height="4" stroke="#a0a0a0" fill="none"/><path d="M4 8 V15 M11.5 8 V15 M2 10 L4 8 L6 10 M9.5 10 L11.5 8 L13.5 10" stroke="#a0a0a0" fill="none"/></svg>
<svg style="position:absolute;left:38px;top:149px" width="16" height="16" viewBox="0 0 16 16"><path d="M1 14.5 H15" stroke="#a0a0a0" fill="none" stroke-width="1.3"/><rect x="1.5" y="8.5" width="6" height="4" stroke="#a0a0a0" fill="none"/><rect x="9.5" y="6.5" width="3" height="6" stroke="#a0a0a0" fill="none"/><path d="M4.5 1 V8 M11 1 V6 M2.5 6 L4.5 8 L6.5 6 M9 4 L11 6 L13 4" stroke="#a0a0a0" fill="none"/></svg>
<svg style="position:absolute;left:61px;top:149px" width="16" height="16" viewBox="0 0 16 16"><path d="M1.5 1 V15" stroke="#a0a0a0" fill="none" stroke-width="1.3"/><rect x="3.5" y="1.5" width="3" height="5" stroke="#a0a0a0" fill="none"/><rect x="3.5" y="9.5" width="3" height="4" stroke="#a0a0a0" fill="none"/><path d="M7 4 H15 M7 11.5 H15 M9 2 L7 4 L9 6 M9 9.5 L7 11.5 L9 13.5" stroke="#a0a0a0" fill="none"/></svg>
<svg style="position:absolute;left:84px;top:149px" width="16" height="16" viewBox="0 0 16 16"><path d="M14.5 1 V15" stroke="#a0a0a0" fill="none" stroke-width="1.3"/><rect x="9.5" y="1.5" width="3" height="5" stroke="#a0a0a0" fill="none"/><rect x="9.5" y="9.5" width="3" height="4" stroke="#a0a0a0" fill="none"/><path d="M1 4 H9 M1 11.5 H9 M7 2 L9 4 L7 6 M7 9.5 L9 11.5 L7 13.5" stroke="#a0a0a0" fill="none"/></svg>
<div style="position:absolute;left:107px;top:149px;width:1px;height:18px;background:#a0a0a0"></div>
<svg style="position:absolute;left:114px;top:149px" width="16" height="16" viewBox="0 0 16 16"><rect x="3.5" y="1.5" width="3" height="13" stroke="#a0a0a0" fill="none"/><rect x="8.5" y="4.5" width="3" height="7" stroke="#a0a0a0" fill="none"/><path d="M0 8 H3 M6.5 8 H8.5 M11.5 8 H15" stroke="#a0a0a0" fill="none"/></svg>
<svg style="position:absolute;left:136px;top:149px" width="16" height="16" viewBox="0 0 16 16"><rect x="1.5" y="8.5" width="13" height="3" stroke="#a0a0a0" fill="none"/><rect x="4.5" y="3.5" width="7" height="3" stroke="#a0a0a0" fill="none"/><path d="M8 0 V3.5 M8 6.5 V8.5 M8 11.5 V15" stroke="#a0a0a0" fill="none"/></svg>
<div style="position:absolute;left:159px;top:149px;width:1px;height:18px;background:#a0a0a0"></div>
<svg style="position:absolute;left:164px;top:149px" width="16" height="16" viewBox="0 0 16 16"><path d="M1 2.5 H3.5 V12.5 H1 M15 2.5 H12.5 V12.5 H15 M4 7.5 H12 M6 5.5 L4 7.5 L6 9.5 M10 5.5 L12 7.5 L10 9.5" stroke="#a0a0a0" fill="none"/></svg>
<svg style="position:absolute;left:188px;top:149px" width="16" height="16" viewBox="0 0 16 16"><path d="M1 1.5 V4.5 H15 V1.5 M1 14.5 V11.5 H15 V14.5 M8 5 V11 M6 7 L8 5 L10 7 M6 9 L8 11 L10 9" stroke="#a0a0a0" fill="none"/></svg>
<svg style="position:absolute;left:15px;top:173px" width="16" height="16" viewBox="0 0 16 16"><path d="M0 1.5 H15 M1 1 L3 -1 M5 1 L7 -1 M9 1 L11 -1 M13 1 L15 -1" stroke="#a0a0a0" fill="none"/><rect x="2.5" y="3.5" width="10" height="3" stroke="#a0a0a0" fill="none"/><path d="M7.5 7 V15 M5.5 9 L7.5 7 L9.5 9" stroke="#a0a0a0" fill="none"/></svg>
<svg style="position:absolute;left:38px;top:173px" width="16" height="16" viewBox="0 0 16 16"><path d="M1 14.5 H15 M1 16 L3 14 M5 16 L7 14 M9 16 L11 14" stroke="#a0a0a0" fill="none"/><rect x="2.5" y="9.5" width="10" height="3" stroke="#a0a0a0" fill="none"/><path d="M7.5 1 V9 M5.5 7 L7.5 9 L9.5 7" stroke="#a0a0a0" fill="none"/></svg>
<svg style="position:absolute;left:61px;top:173px" width="16" height="16" viewBox="0 0 16 16"><path d="M1.5 0 V15 M0 2 L2 0 M0 6 L2 4 M0 10 L2 8 M0 14 L2 12" stroke="#a0a0a0" fill="none"/><rect x="3.5" y="3.5" width="3" height="9" stroke="#a0a0a0" fill="none"/><path d="M7 8 H15 M9 6 L7 8 L9 10" stroke="#a0a0a0" fill="none"/></svg>
<svg style="position:absolute;left:84px;top:173px" width="16" height="16" viewBox="0 0 16 16"><path d="M14.5 0 V15 M14 2 L16 0 M14 6 L16 4 M14 10 L16 8 M14 14 L16 12" stroke="#a0a0a0" fill="none"/><rect x="9.5" y="3.5" width="3" height="9" stroke="#a0a0a0" fill="none"/><path d="M1 8 H9 M7 6 L9 8 L7 10" stroke="#a0a0a0" fill="none"/></svg>
<div style="position:absolute;left:107px;top:173px;width:1px;height:18px;background:#a0a0a0"></div>
<svg style="position:absolute;left:114px;top:173px" width="16" height="16" viewBox="0 0 16 16"><rect x="0.5" y="1.5" width="15" height="13" stroke="#a0a0a0" fill="none"/><rect x="6.5" y="4.5" width="3" height="7" stroke="#a0a0a0" fill="none"/><path d="M1 8 H5 M3.5 6.5 L5 8 L3.5 9.5 M15 8 H11 M12.5 6.5 L11 8 L12.5 9.5" stroke="#a0a0a0" fill="none"/></svg>
<svg style="position:absolute;left:137px;top:173px" width="16" height="16" viewBox="0 0 16 16"><rect x="0.5" y="1.5" width="14" height="13" stroke="#a0a0a0" fill="none"/><rect x="3.5" y="6.5" width="8" height="3" stroke="#a0a0a0" fill="none"/><path d="M7.5 2 V5.5 M6 4 L7.5 5.5 L9 4 M7.5 14 V10.5 M6 12 L7.5 10.5 L9 12" stroke="#a0a0a0" fill="none"/></svg>
<svg style="position:absolute;left:15px;top:197px" width="16" height="16" viewBox="0 0 16 16"><rect x="0.5" y="1.5" width="14" height="13" stroke="#a0a0a0" fill="none"/><path d="M1 6.5 H14 M7.5 2 V9 M5.5 4 L7.5 2 L9.5 4" stroke="#a0a0a0" fill="none"/></svg>
<svg style="position:absolute;left:38px;top:197px" width="16" height="16" viewBox="0 0 16 16"><rect x="0.5" y="1.5" width="14" height="13" stroke="#a0a0a0" fill="none"/><path d="M1 6.5 H14 M7.5 7 V14 M5.5 12 L7.5 14 L9.5 12" stroke="#a0a0a0" fill="none"/></svg>
<svg style="position:absolute;left:61px;top:197px" width="16" height="16" viewBox="0 0 16 16"><rect x="0.5" y="1.5" width="14" height="13" stroke="#a0a0a0" fill="none"/><path d="M1 5.5 H14 M1 10.5 H14 M7.5 2 V14 M5.5 4 L7.5 2 L9.5 4 M5.5 12 L7.5 14 L9.5 12" stroke="#a0a0a0" fill="none"/></svg>
<div style="position:absolute;left:84px;top:197px;width:1px;height:18px;background:#a0a0a0"></div>
<svg style="position:absolute;left:91px;top:197px" width="16" height="16" viewBox="0 0 16 16"><rect x="0.5" y="1.5" width="14" height="13" stroke="#a0a0a0" fill="none"/><path d="M6.5 2 V14 M2 8 H9 M4 6 L2 8 L4 10" stroke="#a0a0a0" fill="none"/></svg>
<svg style="position:absolute;left:114px;top:197px" width="16" height="16" viewBox="0 0 16 16"><rect x="0.5" y="1.5" width="14" height="13" stroke="#a0a0a0" fill="none"/><path d="M8.5 2 V14 M6 8 H13 M11 6 L13 8 L11 10" stroke="#a0a0a0" fill="none"/></svg>
<svg style="position:absolute;left:137px;top:197px" width="16" height="16" viewBox="0 0 16 16"><rect x="0.5" y="1.5" width="14" height="13" stroke="#a0a0a0" fill="none"/><path d="M5.5 2 V14 M9.5 2 V14 M1 8 H5 M3 6 L1 8 L3 10 M10 8 H14 M12 6 L14 8 L12 10" stroke="#a0a0a0" fill="none"/></svg>
<div style="position:absolute;left:159px;top:197px;width:1px;height:18px;background:#a0a0a0"></div>
<svg style="position:absolute;left:165px;top:197px" width="16" height="16" viewBox="0 0 16 16"><rect x="9.5" y="1.5" width="4" height="13" stroke="#a0a0a0" fill="none"/><rect x="1.5" y="6.5" width="4" height="4" stroke="#a0a0a0" fill="none"/><path d="M3.5 1 V5 M2 3 L3.5 1 L5 3 M3.5 11 V15 M2 13 L3.5 15 L5 13 M6 1.5 H8 M6 14.5 H8" stroke="#a0a0a0" fill="none" stroke-dasharray="1 1"/></svg>
<svg style="position:absolute;left:188px;top:197px" width="16" height="16" viewBox="0 0 16 16"><rect x="1.5" y="1.5" width="13" height="4" stroke="#a0a0a0" fill="none"/><rect x="6.5" y="10.5" width="4" height="4" stroke="#a0a0a0" fill="none"/><path d="M1 12.5 H5 M3 11 L1 12.5 L3 14 M11 12.5 H15 M13 11 L15 12.5 L13 14 M1.5 7 V9 M14.5 7 V9" stroke="#a0a0a0" fill="none"/></svg>
<svg style="position:absolute;left:211px;top:197px" width="16" height="16" viewBox="0 0 16 16"><path d="M0.5 4 V1.5 H4 M12 1.5 H15.5 V4 M0.5 11 V14.5 H4 M12 14.5 H15.5 V11" stroke="#a0a0a0" fill="none"/><rect x="6" y="6" width="4" height="4" stroke="#a0a0a0" fill="none"/><path d="M8 1 V5 M6.5 2.5 L8 1 L9.5 2.5 M8 11 V15 M6.5 13.5 L8 15 L9.5 13.5 M1 8 H5 M2.5 6.5 L1 8 L2.5 9.5 M11 8 H15 M13.5 6.5 L15 8 L13.5 9.5" stroke="#a0a0a0" fill="none"/></svg>
<svg style="position:absolute;left:9px;top:229px" width="16" height="16" viewBox="0 0 16 16"><path d="M4 1.5 L4 12.5 L6.5 10 L9 15 L11 14 L8.8 9.2 L12 9 Z" fill="#000"/></svg>
<svg style="position:absolute;left:9px;top:256px" width="16" height="16" viewBox="0 0 16 16"><path d="M1 14 Q3 6 9 2" fill="none" stroke="#a0a0a0" stroke-width="1.2"/><rect x="5" y="5" width="3" height="3" fill="#a0a0a0"/><path d="M8 8 L14 12 L8 14 Z" fill="#a0a0a0"/></svg>
<svg style="position:absolute;left:8px;top:284px" width="16" height="16" viewBox="0 0 16 16"><rect x="1.5" y="4.5" width="11" height="8" fill="#fff" stroke="#000" stroke-width="1.6"/><path d="M10 2 L13 5 M15 1 L9 7 M12 0 V3 M14 5 H16" stroke="#d00000" stroke-width="1"/><circle cx="11.5" cy="4.5" r="1.5" fill="#fff" stroke="#d00000"/><path d="M11 7 V12" stroke="#08a" stroke-dasharray="1 1"/></svg>
<svg style="position:absolute;left:8px;top:306px" width="16" height="16" viewBox="0 0 16 16"><rect x="1.5" y="1.5" width="12" height="11" fill="none" stroke="#a0a0a0" stroke-width="1.2"/><path d="M2 13.5 H14 V2" fill="none" stroke="#a0a0a0" stroke-width="1.5"/></svg>
<svg style="position:absolute;left:8px;top:329px" width="16" height="16" viewBox="0 0 16 16"><path d="M1 14 L1 9 L7 2 Q9 0 11 2 Q12 4 10 6 L4 13 Z" fill="#f0f0f0" stroke="#a0a0a0" stroke-width="1.2"/><path d="M1 14 L1 10 L4 13 Z" fill="#a0a0a0"/><path d="M5 5 L9 8" stroke="#a0a0a0"/><path d="M8 13 Q10 10 12 13 Q13 14 15 11" fill="none" stroke="#a0a0a0"/></svg>
<svg style="position:absolute;left:8px;top:356px" width="16" height="16" viewBox="0 0 16 16"><path d="M2 2 L13 13 M13 2 L2 13" stroke="#a0a0a0" stroke-width="1.8"/></svg>
<svg style="position:absolute;left:33px;top:229px" width="16" height="16" viewBox="0 0 16 16"><rect x="0.5" y="1.5" width="14" height="12" fill="none" stroke="#a0a0a0"/><path d="M3 7.5 H12 M5 5.5 L3 7.5 L5 9.5 M10 5.5 L12 7.5 L10 9.5 M7.5 2 V13" fill="none" stroke="#a0a0a0" stroke-width="1.1"/></svg>
<svg style="position:absolute;left:34px;top:258px" width="16" height="16" viewBox="0 0 16 16"><path d="M1.5 6 L4 1.5 H13 L10.5 6 Z M1.5 13 L4 8.5 H13 L10.5 13 Z M7 4 V11 M5 6 L7 4 L9 6" fill="none" stroke="#a0a0a0" stroke-width="1.1"/></svg>
<svg style="position:absolute;left:34px;top:280px" width="16" height="16" viewBox="0 0 16 16"><path d="M1 1.5 H13 M1 13.5 H13" stroke="#a0a0a0" stroke-width="1.6"/><path d="M5 3 V12 M3 5 L5 3 L7 5 M3 10 L5 12 L7 10" fill="none" stroke="#a0a0a0"/><path d="M8 6 Q8 4 10 4 Q12 4 12 6 Q12 7 10 8 V9 M10 10.5 V11" fill="none" stroke="#a0a0a0"/></svg>
<svg style="position:absolute;left:34px;top:302px" width="16" height="16" viewBox="0 0 16 16"><path d="M2 14 L14 2 M10 2 H14 V6 M1 11 L5 15 M5 11 L1 15" fill="none" stroke="#a0a0a0" stroke-width="1.1"/><path d="M3 4 Q3 2 5 2 Q7 2 7 4 Q7 5 5 6 V7" fill="none" stroke="#a0a0a0"/></svg>
<svg style="position:absolute;left:34px;top:330px" width="16" height="16" viewBox="0 0 16 16"><circle cx="9" cy="8" r="5.5" fill="none" stroke="#a0a0a0" stroke-width="1.2" stroke-dasharray="26 8"/><path d="M9 5 V11 M6 8 H12" stroke="#a0a0a0"/><path d="M1 6 L5 4 L4 8 Z" fill="#a0a0a0"/></svg>
<svg style="position:absolute;left:34px;top:352px" width="16" height="16" viewBox="0 0 16 16"><circle cx="7" cy="8" r="5.5" fill="none" stroke="#a0a0a0" stroke-width="1.2" stroke-dasharray="26 8"/><path d="M7 5 V11 M4 8 H10" stroke="#a0a0a0"/><path d="M15 6 L11 4 L12 8 Z" fill="#a0a0a0"/></svg>
<svg style="position:absolute;left:34px;top:374px" width="16" height="16" viewBox="0 0 16 16"><circle cx="7" cy="7" r="5.5" fill="none" stroke="#a0a0a0" stroke-width="1.2" stroke-dasharray="26 8"/><path d="M7 4 V10 M4 7 H10" stroke="#a0a0a0"/><path d="M13 6 L9 6 L11 9 Z M7 15 L5 12 L9 12 Z" fill="#a0a0a0"/></svg>
<svg style="position:absolute;left:34px;top:401px" width="16" height="16" viewBox="0 0 16 16" shape-rendering="crispEdges"><rect x="3.5" y="4.5" width="11" height="10" fill="none" stroke="#a0a0a0" stroke-width="1.2"/><path d="M1.5 1.5 H9.5 V4 M1.5 1.5 V12 H3" fill="none" stroke="#a0a0a0" stroke-width="1.2"/><rect x="0" y="0" width="3" height="3" fill="#a0a0a0"/><rect x="13" y="0" width="3" height="3" fill="#a0a0a0"/><rect x="0" y="12" width="3" height="3" fill="#a0a0a0"/><rect x="13" y="13" width="3" height="3" fill="#a0a0a0"/></svg>
<svg style="position:absolute;left:34px;top:424px" width="16" height="16" viewBox="0 0 16 16" shape-rendering="crispEdges"><rect x="3.5" y="4.5" width="11" height="10" fill="none" stroke="#a0a0a0" stroke-width="1.2"/><path d="M1.5 1.5 H9.5 V4 M1.5 1.5 V12 H3" fill="none" stroke="#a0a0a0" stroke-width="1.2"/><rect x="0" y="0" width="3" height="3" fill="#a0a0a0"/><rect x="9" y="0" width="3" height="3" fill="#a0a0a0"/><rect x="0" y="12" width="3" height="3" fill="#a0a0a0"/><rect x="13" y="5" width="3" height="3" fill="#a0a0a0"/><rect x="13" y="13" width="3" height="3" fill="#a0a0a0"/><rect x="2" y="13" width="3" height="3" fill="#a0a0a0"/></svg>
<svg style="position:absolute;left:34px;top:451px" width="16" height="16" viewBox="0 0 16 16"><rect x="1.5" y="7.5" width="11" height="8" fill="none" stroke="#a0a0a0" stroke-width="1.2"/><path d="M3 10 H11 M3 12.5 H11" stroke="#a0a0a0"/><path d="M3 7 Q6 2 10 4 L14 1 V7 L10 6" fill="none" stroke="#a0a0a0" stroke-width="1.2"/></svg>
<svg style="position:absolute;left:28px;top:620px" width="16" height="16" viewBox="0 0 16 16"><path d="M1.5 2.5 H12.5 V14.5 H3.5 L1.5 12.5 Z" fill="#808000" stroke="#000" stroke-width="1.2"/><path d="M4 5 H11 M4 8 H11 M4 11 H11" stroke="#000" stroke-width="1.3"/><path d="M12.5 1.5 V13" stroke="#000" stroke-width="1.5"/></svg>
<svg style="position:absolute;left:115px;top:619px" width="16" height="16" viewBox="0 0 16 16"><path d="M2 1.5 H8" stroke="#800000" stroke-width="2"/><rect x="3.5" y="3" width="3" height="11" fill="#800000"/><path d="M3 5 H7 M3 8 H7 M3 11 H7" stroke="#ffb0b0" stroke-width="0.8"/></svg>
<svg style="position:absolute;left:204px;top:619px" width="16" height="16" viewBox="0 0 16 16" shape-rendering="crispEdges"><rect x="0.5" y="1.5" width="6" height="6" fill="#fff" stroke="#000"/><rect x="7.5" y="1.5" width="6" height="6" fill="#fff" stroke="#000"/><rect x="0.5" y="8.5" width="6" height="6" fill="#fff" stroke="#000"/><rect x="7.5" y="8.5" width="6" height="6" fill="#fff" stroke="#000"/><rect x="2" y="3" width="3" height="3" fill="#e0e000"/><rect x="9" y="3" width="3" height="3" fill="#c0c040"/><rect x="2" y="10" width="3" height="3" fill="#e03030"/><rect x="9" y="10" width="3" height="3" fill="#ddd"/><path d="M0.5 1.5 H13.5" stroke="#000"/></svg>
<svg style="position:absolute;left:307px;top:619px" width="16" height="16" viewBox="0 0 16 16"><rect x="0.5" y="1.5" width="12" height="12" fill="#808000" stroke="#000" stroke-width="1.2"/><rect x="3.5" y="3.5" width="6" height="7" fill="#a0a040" stroke="#000"/></svg>
<svg style="position:absolute;left:385px;top:619px" width="16" height="16" viewBox="0 0 16 16"><rect x="1" y="2" width="13" height="10" fill="#9a9a60"/><path d="M1 3 H14 M1 5 H14 M1 7 H14 M1 9 H14 M1 11 H14" stroke="#c8c890" stroke-width="0.7" stroke-dasharray="1 1"/><path d="M0 13.5 H15 V1" fill="none" stroke="#0000ff" stroke-width="2"/></svg>
<svg style="position:absolute;left:461px;top:619px" width="16" height="16" viewBox="0 0 16 16"><path d="M7 1 L10 4 L7 7 L4 4 Z" fill="#f00"/><path d="M10 4 L14 5 L11 8 L8 7 Z" fill="#800000"/><path d="M4 4 L1 6 L3 9 L6 7 Z" fill="#0ee"/><path d="M6 7 L8 7 L11 8 L9 12 L5 11 Z" fill="#fe0"/><path d="M3 9 L5 11 L4 14 L1 12 Z" fill="#080"/><path d="M9 12 L12 13 L10 15 L7 14 Z" fill="#006060"/><path d="M11 8 L14 9 L12 12 Z" fill="#40a000"/></svg>
<svg style="position:absolute;left:589px;top:647px" width="16" height="17" viewBox="0 0 16 17"><path d="M0.5 4.5 H10.5 V14.5 H0.5 Z M4.5 0.5 H14.5 V10.5 H4.5 Z M0.5 4.5 L4.5 0.5 M10.5 4.5 L14.5 0.5 M10.5 14.5 L14.5 10.5 M0.5 14.5 L4.5 10.5" fill="none" stroke="#808080" stroke-width="1"/><path d="M-1 15 H4 M1.5 12.5 V17.5" stroke="#f00" stroke-width="1.3"/></svg>
<svg style="position:absolute;left:725px;top:646px" width="17" height="16" viewBox="0 0 17 16"><path d="M0.5 4.5 H10.5 V14.5 H0.5 Z M4.5 0.5 H14.5 V10.5 H4.5 Z M0.5 4.5 L4.5 0.5 M10.5 4.5 L14.5 0.5 M10.5 14.5 L14.5 10.5 M0.5 14.5 L4.5 10.5" fill="none" stroke="#808080" stroke-width="1"/><path d="M12 2.5 H17 M14.5 0 V5" stroke="#f00" stroke-width="1.3"/></svg>
<svg style="position:absolute;left:862px;top:647px" width="16" height="16" viewBox="0 0 16 16"><path d="M0.5 4.5 H10.5 V14.5 H0.5 Z M4.5 0.5 H14.5 V10.5 H4.5 Z M0.5 4.5 L4.5 0.5 M10.5 4.5 L14.5 0.5 M10.5 14.5 L14.5 10.5 M0.5 14.5 L4.5 10.5" fill="none" stroke="#900000" stroke-width="1.2"/></svg>
<svg style="position:absolute;left:1004px;top:652px" width="9" height="9" viewBox="0 0 9 9" shape-rendering="crispEdges"><rect x="6" y="0" width="2" height="2" fill="#b4b4b4"/><rect x="6" y="3" width="2" height="2" fill="#b4b4b4"/><rect x="3" y="3" width="2" height="2" fill="#b4b4b4"/><rect x="6" y="6" width="2" height="2" fill="#b4b4b4"/><rect x="3" y="6" width="2" height="2" fill="#b4b4b4"/><rect x="0" y="6" width="2" height="2" fill="#b4b4b4"/></svg></body></html>
